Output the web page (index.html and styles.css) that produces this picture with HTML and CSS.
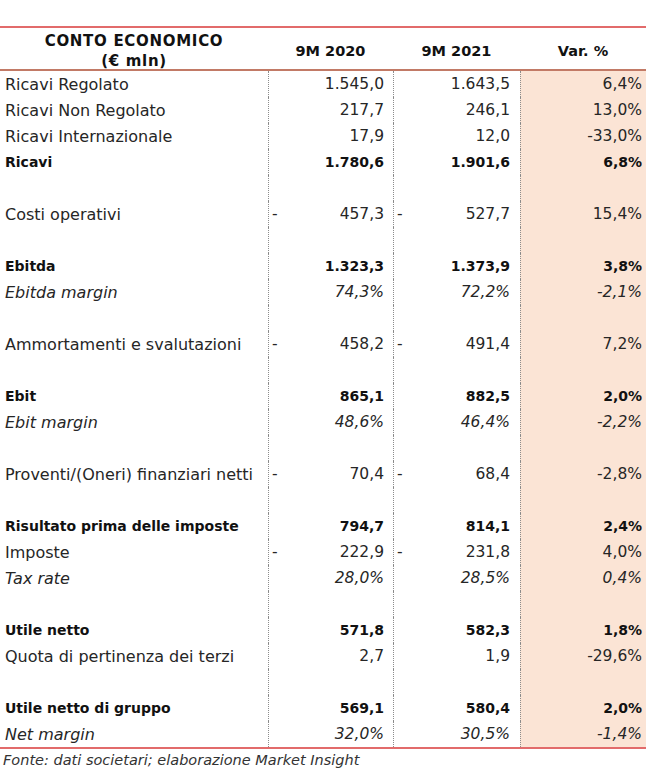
FILE: index.html
```html
<!DOCTYPE html>
<html lang="it">
<head>
<meta charset="utf-8">
<title>Conto economico</title>
<link rel="stylesheet" href="styles.css">
</head>
<body>
<div class="sheet">
  <div class="head">
    <div class="hcell title">CONTO ECONOMICO<br>(€ mln)</div>
    <div class="hcell">9M 2020</div>
    <div class="hcell">9M 2021</div>
    <div class="hcell">Var. %</div>
  </div>
  <div class="body">
    <div class="lbl">Ricavi Regolato</div><div class="num c2">1.545,0</div><div class="num c3">1.643,5</div><div class="num c4">6,4%</div>
    <div class="lbl">Ricavi Non Regolato</div><div class="num c2">217,7</div><div class="num c3">246,1</div><div class="num c4">13,0%</div>
    <div class="lbl">Ricavi Internazionale</div><div class="num c2">17,9</div><div class="num c3">12,0</div><div class="num c4">-33,0%</div>
    <div class="lbl b">Ricavi</div><div class="num c2 b">1.780,6</div><div class="num c3 b">1.901,6</div><div class="num c4 b">6,8%</div>

    <div class="lbl"></div><div class="num c2"></div><div class="num c3"></div><div class="num c4"></div>
    <div class="lbl">Costi operativi</div><div class="num c2"><span class="dash">-</span>457,3</div><div class="num c3"><span class="dash">-</span>527,7</div><div class="num c4">15,4%</div>
    <div class="lbl"></div><div class="num c2"></div><div class="num c3"></div><div class="num c4"></div>

    <div class="lbl b">Ebitda</div><div class="num c2 b">1.323,3</div><div class="num c3 b">1.373,9</div><div class="num c4 b">3,8%</div>
    <div class="lbl i">Ebitda margin</div><div class="num c2 i">74,3%</div><div class="num c3 i">72,2%</div><div class="num c4 i">-2,1%</div>
    <div class="lbl"></div><div class="num c2"></div><div class="num c3"></div><div class="num c4"></div>

    <div class="lbl">Ammortamenti e svalutazioni</div><div class="num c2"><span class="dash">-</span>458,2</div><div class="num c3"><span class="dash">-</span>491,4</div><div class="num c4">7,2%</div>
    <div class="lbl"></div><div class="num c2"></div><div class="num c3"></div><div class="num c4"></div>

    <div class="lbl b">Ebit</div><div class="num c2 b">865,1</div><div class="num c3 b">882,5</div><div class="num c4 b">2,0%</div>
    <div class="lbl i">Ebit margin</div><div class="num c2 i">48,6%</div><div class="num c3 i">46,4%</div><div class="num c4 i">-2,2%</div>
    <div class="lbl"></div><div class="num c2"></div><div class="num c3"></div><div class="num c4"></div>

    <div class="lbl">Proventi/(Oneri) finanziari netti</div><div class="num c2"><span class="dash">-</span>70,4</div><div class="num c3"><span class="dash">-</span>68,4</div><div class="num c4">-2,8%</div>
    <div class="lbl"></div><div class="num c2"></div><div class="num c3"></div><div class="num c4"></div>

    <div class="lbl b">Risultato prima delle imposte</div><div class="num c2 b">794,7</div><div class="num c3 b">814,1</div><div class="num c4 b">2,4%</div>
    <div class="lbl">Imposte</div><div class="num c2"><span class="dash">-</span>222,9</div><div class="num c3"><span class="dash">-</span>231,8</div><div class="num c4">4,0%</div>
    <div class="lbl i">Tax rate</div><div class="num c2 i">28,0%</div><div class="num c3 i">28,5%</div><div class="num c4 i">0,4%</div>
    <div class="lbl"></div><div class="num c2"></div><div class="num c3"></div><div class="num c4"></div>

    <div class="lbl b">Utile netto</div><div class="num c2 b">571,8</div><div class="num c3 b">582,3</div><div class="num c4 b">1,8%</div>
    <div class="lbl">Quota di pertinenza dei terzi</div><div class="num c2">2,7</div><div class="num c3">1,9</div><div class="num c4">-29,6%</div>
    <div class="lbl"></div><div class="num c2"></div><div class="num c3"></div><div class="num c4"></div>

    <div class="lbl b">Utile netto di gruppo</div><div class="num c2 b">569,1</div><div class="num c3 b">580,4</div><div class="num c4 b">2,0%</div>
    <div class="lbl i">Net margin</div><div class="num c2 i">32,0%</div><div class="num c3 i">30,5%</div><div class="num c4 i">-1,4%</div>
  </div>
  <div class="source">Fonte: dati societari; elaborazione Market Insight</div>
</div>
</body>
</html>
```

FILE: styles.css
```css
* { box-sizing: border-box; }

body {
  margin: 0;
  background: #ffffff;
  font-family: "DejaVu Sans", "Noto Sans", sans-serif;
  color: #262626;
}

.sheet {
  width: 646px;
  padding-top: 26px;
}

.head {
  display: grid;
  grid-template-columns: 268px 125px 127px 126px;
  height: 45px;
  border-top: 2px solid #e26b6b;
  border-bottom: 2px solid #c27a66;
}

.hcell {
  display: flex;
  align-items: center;
  justify-content: center;
  text-align: center;
  font-weight: bold;
  font-size: 14.5px;
  line-height: 20px;
  color: #111111;
  padding-top: 3px;
}

.title {
  font-size: 15px;
  letter-spacing: 0.7px;
}

.body {
  display: grid;
  grid-template-columns: 268px 125px 127px 126px;
  grid-auto-rows: 26px;
  border-bottom: 2px solid #e26b6b;
}

.lbl,
.num {
  display: flex;
  align-items: center;
  font-size: 16px;
  white-space: nowrap;
}

.lbl {
  padding-left: 5px;
}

.num {
  justify-content: flex-end;
  border-left: 1px dotted #8c8c8c;
  font-size: 15.5px;
}

.c2 { padding-right: 9px; }
.c3 { padding-right: 10px; }
.c4 { padding-right: 4px; background: #fbe4d5; }

.dash {
  margin-right: auto;
  padding-left: 3px;
}

.b {
  font-weight: bold;
  font-size: 14px;
  color: #111111;
}

.i {
  font-style: italic;
}

.source {
  padding: 3px 0 0 3px;
  font-size: 14.5px;
  font-style: italic;
  color: #333333;
}
```
